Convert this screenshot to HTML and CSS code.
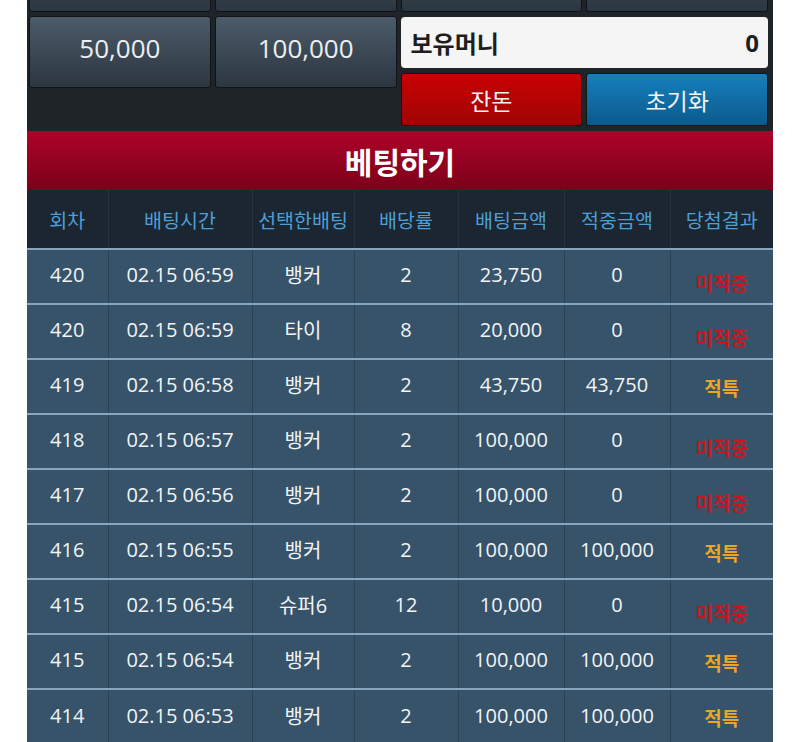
FILE: index.html
```html
<!DOCTYPE html>
<html lang="ko">
<head>
<meta charset="utf-8">
<link rel="stylesheet" href="styles.css">
</head>
<body>
<div class="wrap">
  <div class="panel">
    <div class="btn chip"></div>
    <div class="btn chip"></div>
    <div class="btn chip"></div>
    <div class="btn chip"></div>
    <div class="btn chip">50,000</div>
    <div class="btn chip">100,000</div>
    <div class="side">
      <div class="money"><span>보유머니</span><span>0</span></div>
      <div class="actions">
        <div class="btn red">잔돈</div>
        <div class="btn blue">초기화</div>
      </div>
    </div>
  </div>
  <div class="title">베팅하기</div>
  <table class="bets">
    <colgroup>
      <col class="c1"><col class="c2"><col class="c3"><col class="c4"><col class="c5"><col class="c6"><col class="c7">
    </colgroup>
    <thead>
      <tr><th>회차</th><th>배팅시간</th><th>선택한배팅</th><th>배당률</th><th>배팅금액</th><th>적중금액</th><th>당첨결과</th></tr>
    </thead>
    <tbody>
      <tr><td>420</td><td>02.15 06:59</td><td>뱅커</td><td>2</td><td>23,750</td><td>0</td><td class="lose">미적중</td></tr>
      <tr><td>420</td><td>02.15 06:59</td><td>타이</td><td>8</td><td>20,000</td><td>0</td><td class="lose">미적중</td></tr>
      <tr><td>419</td><td>02.15 06:58</td><td>뱅커</td><td>2</td><td>43,750</td><td>43,750</td><td class="win">적특</td></tr>
      <tr><td>418</td><td>02.15 06:57</td><td>뱅커</td><td>2</td><td>100,000</td><td>0</td><td class="lose">미적중</td></tr>
      <tr><td>417</td><td>02.15 06:56</td><td>뱅커</td><td>2</td><td>100,000</td><td>0</td><td class="lose">미적중</td></tr>
      <tr><td>416</td><td>02.15 06:55</td><td>뱅커</td><td>2</td><td>100,000</td><td>100,000</td><td class="win">적특</td></tr>
      <tr><td>415</td><td>02.15 06:54</td><td>슈퍼6</td><td>12</td><td>10,000</td><td>0</td><td class="lose">미적중</td></tr>
      <tr><td>415</td><td>02.15 06:54</td><td>뱅커</td><td>2</td><td>100,000</td><td>100,000</td><td class="win">적특</td></tr>
      <tr><td>414</td><td>02.15 06:53</td><td>뱅커</td><td>2</td><td>100,000</td><td>100,000</td><td class="win">적특</td></tr>
    </tbody>
  </table>
</div>
</body>
</html>
```

FILE: styles.css
```css
html, body {
  margin: 0;
  padding: 0;
  background: #ffffff;
  overflow: hidden;
}
body {
  font-family: "Open Sans", "Noto Sans CJK KR", sans-serif;
}
.wrap {
  width: 746px;
  margin-left: 27px;
  margin-top: -62px;
  background: #36536a;
}
.panel {
  background: #1e2428;
  padding: 2px 5px 5px 2px;
  display: grid;
  grid-template-columns: repeat(4, 1fr);
  grid-template-rows: 72px auto;
  column-gap: 4px;
  row-gap: 4px;
}
.btn {
  display: flex;
  align-items: center;
  justify-content: center;
  border-radius: 3px;
  box-sizing: border-box;
}
.chip {
  height: 72px;
  align-self: start;
  padding-bottom: 8px;
  background: linear-gradient(#4b5b69, #2b3640);
  border: 1px solid #101418;
  color: #eceef0;
  font-size: 26px;
}
.side {
  grid-column: 3 / 5;
  display: flex;
  flex-direction: column;
  gap: 5px;
  padding-top: 1px;
}
.money {
  height: 51px;
  background: #f5f5f5;
  border-radius: 4px;
  display: flex;
  justify-content: space-between;
  align-items: center;
  padding: 0 9px 0 10px;
  font-weight: bold;
  font-size: 24px;
  color: #1e1e1e;
}
.actions {
  display: grid;
  grid-template-columns: 1fr 1fr;
  gap: 4px;
}
.actions .btn {
  height: 53px;
  color: #f4f4f4;
  font-size: 23px;
  border: 1px solid #151515;
}
.red {
  background: linear-gradient(#c80202, #a00404);
}
.blue {
  background: linear-gradient(#1680bc, #0b5a8c);
}
.title {
  height: 59px;
  background: linear-gradient(#ad0329, #7c0019);
  color: #ffffff;
  font-weight: bold;
  font-size: 30px;
  display: flex;
  align-items: center;
  justify-content: center;
}
.bets {
  width: 746px;
  border-collapse: collapse;
  table-layout: fixed;
}
.c1 { width: 81px; }
.c2 { width: 144px; }
.c3 { width: 102px; }
.c4 { width: 104px; }
.c5 { width: 106px; }
.c6 { width: 106px; }
.c7 { width: 103px; }
.bets th {
  height: 58px;
  padding: 0;
  background: #1b2630;
  color: #4d9fd6;
  font-weight: normal;
  font-size: 19.5px;
  border-left: 1px solid #26323e;
}
.bets th:first-child, .bets td:first-child {
  border-left: none;
}
.bets td {
  height: 55px;
  padding: 0 0 4px 0;
  box-sizing: border-box;
  text-align: center;
  color: #f2f4f6;
  font-size: 20px;
  border-top: 2px solid #87a6bd;
  border-left: 1px solid #2b4254;
}
.bets td.lose {
  color: #c41820;
  font-size: 19px;
  font-weight: bold;
  padding-top: 12px;
  padding-bottom: 0;
}
.bets td.win {
  color: #eaa428;
  font-size: 19px;
  font-weight: bold;
  padding-top: 2px;
  padding-bottom: 0;
}
```
